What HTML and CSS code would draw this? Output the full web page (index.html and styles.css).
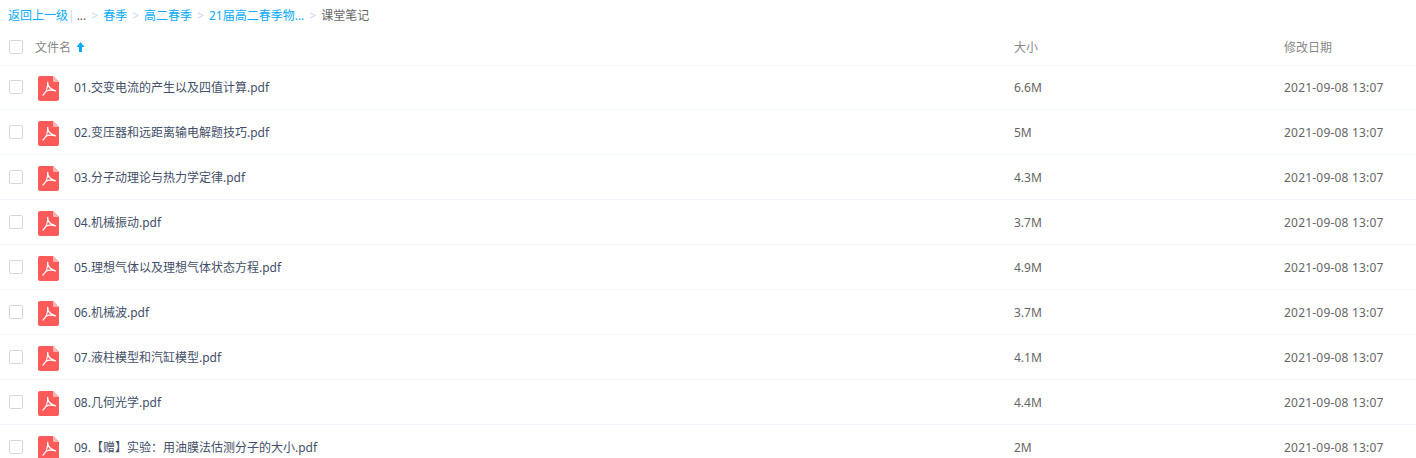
FILE: index.html
```html
<!DOCTYPE html>
<html lang="zh-CN">
<head>
    <meta charset="UTF-8">
    <title>课堂笔记</title>
    <link rel="stylesheet" href="styles.css">
</head>
<body>
    <svg class="defs" width="0" height="0">
        <symbol id="pdf" viewBox="0 0 21 25">
            <path d="M2 0H15L21 6V23a2 2 0 0 1-2 2H2a2 2 0 0 1-2-2V2a2 2 0 0 1 2-2Z" fill="#ff5a5a"/>
            <path d="M15 0L21 6H16a1 1 0 0 1-1-1Z" fill="#ffb3b3"/>
            <path d="M9.7 6.5C9.5 10 11 12.8 17.5 14.8M5 19C7.5 17 10 12 9.7 6.5M7.5 15.5C10 14 13 13.6 17.5 14.8" fill="none" stroke="#fff" stroke-width="1.3" stroke-linecap="round"/>
        </symbol>
    </svg>

    <div class="crumbs">
        <a>返回上一级</a><span class="bar">|</span><span class="dots">...</span>
        <span class="sep">&gt;</span><a>春季</a>
        <span class="sep">&gt;</span><a>高二春季</a>
        <span class="sep">&gt;</span><a>21届高二春季物...</a>
        <span class="sep">&gt;</span><span class="current">课堂笔记</span>
    </div>

    <div class="head row">
        <span class="check"></span>
        <span class="name">文件名<svg class="arrow" width="9" height="10" viewBox="0 0 9 10"><path d="M4.5 0L8.5 5H6V10H3V5H.5Z" fill="#09aaff"/></svg></span>
        <span class="size">大小</span>
        <span class="date">修改日期</span>
    </div>

    <!-- File rows -->
    <div class="row file">
        <span class="check"></span>
        <svg class="icon"><use href="#pdf"/></svg>
        <span class="title">01.交变电流的产生以及四值计算.pdf</span>
        <span class="size">6.6M</span>
        <span class="date">2021-09-08 13:07</span>
    </div>
    <div class="row file">
        <span class="check"></span>
        <svg class="icon"><use href="#pdf"/></svg>
        <span class="title">02.变压器和远距离输电解题技巧.pdf</span>
        <span class="size">5M</span>
        <span class="date">2021-09-08 13:07</span>
    </div>
    <div class="row file">
        <span class="check"></span>
        <svg class="icon"><use href="#pdf"/></svg>
        <span class="title">03.分子动理论与热力学定律.pdf</span>
        <span class="size">4.3M</span>
        <span class="date">2021-09-08 13:07</span>
    </div>
    <div class="row file">
        <span class="check"></span>
        <svg class="icon"><use href="#pdf"/></svg>
        <span class="title">04.机械振动.pdf</span>
        <span class="size">3.7M</span>
        <span class="date">2021-09-08 13:07</span>
    </div>
    <div class="row file">
        <span class="check"></span>
        <svg class="icon"><use href="#pdf"/></svg>
        <span class="title">05.理想气体以及理想气体状态方程.pdf</span>
        <span class="size">4.9M</span>
        <span class="date">2021-09-08 13:07</span>
    </div>
    <div class="row file">
        <span class="check"></span>
        <svg class="icon"><use href="#pdf"/></svg>
        <span class="title">06.机械波.pdf</span>
        <span class="size">3.7M</span>
        <span class="date">2021-09-08 13:07</span>
    </div>
    <div class="row file">
        <span class="check"></span>
        <svg class="icon"><use href="#pdf"/></svg>
        <span class="title">07.液柱模型和汽缸模型.pdf</span>
        <span class="size">4.1M</span>
        <span class="date">2021-09-08 13:07</span>
    </div>
    <div class="row file">
        <span class="check"></span>
        <svg class="icon"><use href="#pdf"/></svg>
        <span class="title">08.几何光学.pdf</span>
        <span class="size">4.4M</span>
        <span class="date">2021-09-08 13:07</span>
    </div>
    <div class="row file">
        <span class="check"></span>
        <svg class="icon"><use href="#pdf"/></svg>
        <span class="title">09.【赠】实验：用油膜法估测分子的大小.pdf</span>
        <span class="size">2M</span>
        <span class="date">2021-09-08 13:07</span>
    </div>
</body>
</html>
```

FILE: styles.css
```css
html, body {
    height: 100%;
    overflow: hidden;
}

body {
    margin: 0;
    font-family: "Noto Sans", "Noto Sans CJK SC", sans-serif;
    font-size: 12px;
    color: #424e67;
    background-color: #fff;
}

.defs {
    position: absolute;
}

.crumbs {
    display: flex;
    align-items: center;
    height: 30px;
    padding-left: 8px;
    color: #666;
}

.crumbs a {
    color: #09aaff;
}

.bar {
    margin-right: 2px;
    color: #c4d8f4;
}

.dots {
    color: #666;
}

.sep {
    margin: 0 5px;
    color: #c4d8f4;
}

.current {
    color: #666;
}

.row {
    display: flex;
    align-items: center;
    box-sizing: border-box;
    border-bottom: 1px solid #f2f6fd;
}

.head {
    height: 36px;
    padding-bottom: 2px;
    color: #888;
}

.file {
    height: 45px;
    color: #424e67;
}

.head + .file {
    height: 44px;
    padding-bottom: 1px;
}

.check {
    flex: none;
    box-sizing: border-box;
    width: 14px;
    height: 14px;
    margin-left: 9px;
    border: 1px solid #d4d7de;
    border-radius: 2px;
    background-color: #fff;
}

.name {
    display: flex;
    align-items: center;
    width: 979px;
    margin-left: 12px;
}

.arrow {
    margin-left: 5px;
}

.icon {
    flex: none;
    align-self: flex-start;
    width: 21px;
    height: 25px;
    margin: 11px 0 0 15px;
}

.head + .file .icon {
    margin-top: 10px;
}

.title {
    width: 940px;
    margin-left: 15px;
}

.size {
    width: 270px;
}

.date {
    white-space: nowrap;
}

.file .size,
.file .date {
    color: #666;
}

.file .date {
    letter-spacing: 0.2px;
}
```
